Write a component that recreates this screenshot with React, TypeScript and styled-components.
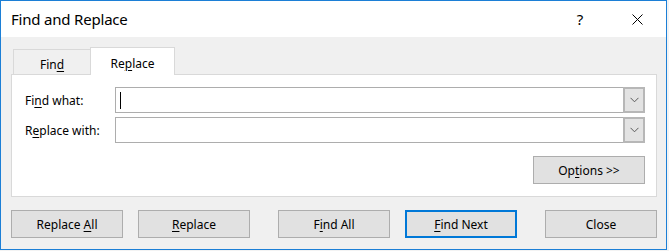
import styled, { createGlobalStyle } from "styled-components";

const GlobalStyle = createGlobalStyle`
  html, body {
    margin: 0;
    padding: 0;
    background: #f3f3f3;
  }
  body {
    font-family: "Noto Sans", "Open Sans", sans-serif;
    font-size: 12px;
    color: #000;
  }
`;

const Window = styled.div`
  width: 667px;
  height: 250px;
  box-sizing: border-box;
  border: 1px solid #1c7fd6;
  background: #f0f0f0;
  display: flex;
  flex-direction: column;
`;

const TitleBar = styled.div`
  height: 36px;
  background: #fff;
  display: flex;
  align-items: center;
  padding: 0 6px 0 10px;
`;

const Title = styled.div`
  flex: 1;
  font-size: 15px;
  letter-spacing: -0.2px;
`;

const CaptionButton = styled.div<{ $gap?: number }>`
  width: 46px;
  height: 36px;
  display: flex;
  align-items: center;
  justify-content: center;
  margin-left: ${(p) => p.$gap ?? 0}px;
  font-size: 15px;
`;

const Body = styled.div`
  flex: 1;
  padding: 10px 9px 0 10px;
  display: flex;
  flex-direction: column;
`;

const TabStrip = styled.div`
  display: flex;
  align-items: flex-end;
  padding-left: 2px;
  height: 27px;
  position: relative;
  z-index: 1;
`;

const Tab = styled.div<{ $active?: boolean }>`
  box-sizing: border-box;
  display: flex;
  align-items: center;
  justify-content: center;
  padding-top: 3px;
  ${(p) =>
    p.$active
      ? `
    width: 85px;
    height: 28px;
    margin-bottom: -1px;
    background: #fff;
    border: 1px solid #d9d9d9;
    border-bottom: none;
  `
      : `
    width: 77px;
    height: 25px;
    background: #f0f0f0;
    border-top: 1px solid #d9d9d9;
    border-left: 1px solid #d9d9d9;
    padding-top: 4px;
  `}
`;

const Panel = styled.div`
  width: 646px;
  height: 123px;
  box-sizing: border-box;
  background: #fff;
  border: 1px solid #d9d9d9;
  padding: 12px 11px 0 13px;
  display: flex;
  flex-direction: column;
`;

const FieldRow = styled.div<{ $gap?: number }>`
  display: flex;
  align-items: center;
  margin-top: ${(p) => p.$gap ?? 0}px;
`;

const Label = styled.div`
  width: 90px;
`;

const Combo = styled.div`
  flex: 1;
  height: 26px;
  box-sizing: border-box;
  border: 1px solid #adadad;
  display: flex;
  align-items: center;
  position: relative;
`;

const Caret = styled.span`
  width: 1px;
  height: 17px;
  background: #000;
  margin-left: 4px;
`;

const DropButton = styled.div`
  position: absolute;
  right: -1px;
  top: -1px;
  width: 22px;
  height: 26px;
  box-sizing: border-box;
  border: 2px solid #b7b7b7;
  background: #e3e3e3;
  display: flex;
  align-items: center;
  justify-content: center;
`;

const OptionsRow = styled.div`
  display: flex;
  justify-content: flex-end;
  margin-top: 13px;
`;

const Button = styled.button<{ $focused?: boolean }>`
  width: 112px;
  height: 28px;
  box-sizing: border-box;
  background: #e1e1e1;
  border: ${(p) => (p.$focused ? "2px solid #0078d7" : "1px solid #adadad")};
  font-family: "Noto Sans", "Open Sans", sans-serif;
  font-size: 12px;
  color: #000;
  padding: 0;
  margin-left: ${(p) => (p.$focused !== undefined ? 0 : 0)}px;
`;

const ButtonRow = styled.div`
  display: flex;
  margin-top: 13px;
  padding-left: 0;
`;

const Spacer = styled.div<{ $w: number }>`
  width: ${(p) => p.$w}px;
  flex-shrink: 0;
`;

const Key = styled.span`
  text-decoration: underline;
  text-underline-offset: 2px;
`;

const Chevron = () => (
  <svg width="9" height="6" viewBox="0 0 9 6">
    <path d="M0.5 0.8 L4.5 4.8 L8.5 0.8" fill="none" stroke="#5a5a5a" strokeWidth="1" />
  </svg>
);

const CloseIcon = () => (
  <svg width="11" height="11" viewBox="0 0 11 11">
    <path d="M0.5 0.5 L10.5 10.5 M10.5 0.5 L0.5 10.5" stroke="#000" strokeWidth="1" />
  </svg>
);

export default function App() {
  return (
    <>
      <GlobalStyle />
      <Window>
        <TitleBar>
          <Title>Find and Replace</Title>
          <CaptionButton>?</CaptionButton>
          <CaptionButton $gap={11}>
            <CloseIcon />
          </CaptionButton>
        </TitleBar>
        <Body>
          <TabStrip>
            <Tab>
              Fin<Key>d</Key>
            </Tab>
            <Tab $active>
              Re<Key>p</Key>lace
            </Tab>
          </TabStrip>
          <Panel>
            <FieldRow>
              <Label>
                Fi<Key>n</Key>d what:
              </Label>
              <Combo>
                <Caret />
                <DropButton>
                  <Chevron />
                </DropButton>
              </Combo>
            </FieldRow>
            <FieldRow $gap={4}>
              <Label>
                R<Key>e</Key>place with:
              </Label>
              <Combo>
                <DropButton>
                  <Chevron />
                </DropButton>
              </Combo>
            </FieldRow>
            <OptionsRow>
              <Button>
                Op<Key>t</Key>ions &gt;&gt;
              </Button>
            </OptionsRow>
          </Panel>
          <ButtonRow>
            <Button>
              Replace <Key>A</Key>ll
            </Button>
            <Spacer $w={15} />
            <Button>
              <Key>R</Key>eplace
            </Button>
            <Spacer $w={28} />
            <Button>
              F<Key>i</Key>nd All
            </Button>
            <Spacer $w={15} />
            <Button $focused>
              <Key>F</Key>ind Next
            </Button>
            <Spacer $w={28} />
            <Button>Close</Button>
          </ButtonRow>
        </Body>
      </Window>
    </>
  );
}
